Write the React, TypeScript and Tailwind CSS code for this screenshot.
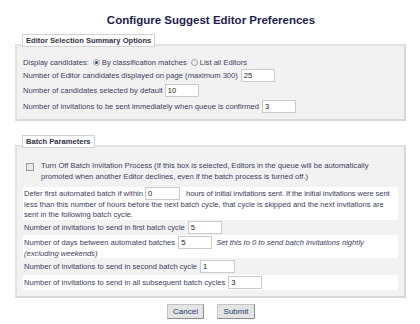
import React from 'react';

const inputCls =
  'h-[13px] w-[34px] shrink-0 border border-[#cbcbcb] bg-white pl-[2px] text-[7.6px] leading-[11px] text-[#222] outline-none';

function Field({ value, className = '' }: { value: string; className?: string }) {
  return <input readOnly defaultValue={value} className={`${inputCls} ${className}`} />;
}

function Radio({ checked }: { checked?: boolean }) {
  return (
    <span className="inline-flex h-[7px] w-[7px] shrink-0 items-center justify-center rounded-full border border-[#a0a0a0] bg-[#eeeeee]">
      {checked && <span className="h-[3px] w-[3px] rounded-full bg-[#2c4d78]" />}
    </span>
  );
}

function Legend({ children }: { children: React.ReactNode }) {
  return (
    <div className="relative z-10 ml-[7px] h-[13px] w-fit border border-[#d2d2d2] bg-white px-[3px] text-[7.6px] font-bold leading-[11px] text-[#333344]">
      {children}
    </div>
  );
}

export default function App() {
  return (
    <div className="h-[324px] w-[420px] overflow-hidden bg-white font-['Liberation_Sans',Arial,sans-serif] text-[7.6px] text-[#3d3d5a]">
      <h1 className="pl-[2px] pt-[14px] text-center text-[11.5px] font-bold leading-[13px] text-[#1d1d4f]">
        Configure Suggest Editor Preferences
      </h1>

      {/* Editor selection summary */}
      <div className="ml-[15px] mt-[7px] w-[391px]">
        <Legend>Editor Selection Summary Options</Legend>
        <div className="-mt-[3px] border-2 border-[#e2e2e2] border-r-[#d8d8d8] border-b-[#d8d8d8] bg-[#f2f2f2] px-[6px] pb-[6px] pt-[10px]">
          <div className="flex h-[13px] items-center">
            <span>Display candidates:</span>
            <span className="ml-[4px] mr-[2px] flex">
              <Radio checked />
            </span>
            <span>By classification matches</span>
            <span className="ml-[4px] mr-[2px] flex">
              <Radio />
            </span>
            <span>List all Editors</span>
          </div>
          <div className="flex h-[13px] items-center">
            <span>Number of Editor candidates displayed on page (maximum 300)</span>
            <Field value="25" className="ml-[3px]" />
          </div>
          <div className="mt-[2px] flex h-[13px] items-center">
            <span>Number of candidates selected by default</span>
            <Field value="10" className="ml-[2px]" />
          </div>
          <div className="mt-[3px] flex h-[13px] items-center">
            <span>Number of invitations to be sent immediately when queue is confirmed</span>
            <Field value="3" className="ml-[3px]" />
          </div>
        </div>
      </div>

      {/* Batch parameters */}
      <div className="ml-[15px] mt-[14px] w-[391px]">
        <Legend>Batch Parameters</Legend>
        <div className="-mt-[3px] border-2 border-[#e2e2e2] border-r-[#d8d8d8] border-b-[#d8d8d8] bg-[#f2f2f2] px-[6px] pb-[6px] pt-[14px]">
          <div className="flex items-start leading-[10.5px]">
            <span className="ml-[3px] mr-[7px] mt-[2px] h-[8px] w-[8px] shrink-0 border border-[#9c9c9c] bg-[#e9e9e9]" />
            <span>
              Turn Off Batch Invitation Process (If this box is selected, Editors in the queue will be automatically
              <br />
              promoted when another Editor declines, even if the batch process is turned off.)
            </span>
          </div>

          <div className="mt-[5px] flex flex-col">
            <div className="h-[33px] whitespace-nowrap bg-white pl-[1px]">
              <div className="flex h-[13px] items-center">
                <span>Defer first automated batch if within</span>
                <Field value="0" className="ml-[2px] mr-[6px] w-[35px]" />
                <span className="tracking-[-0.1px]">
                  hours of initial invitations sent. If the initial invitations were sent
                </span>
              </div>
              <div className="h-[10px] leading-[10px]">
                less than this number of hours before the next batch cycle, that cycle is skipped and the next invitations are
              </div>
              <div className="h-[10px] leading-[10px]">sent in the following batch cycle.</div>
            </div>

            <div className="flex h-[15px] items-center pl-[1px]">
              <span>Number of invitations to send in first batch cycle</span>
              <Field value="5" className="ml-[3px]" />
            </div>

            <div className="h-[23px] whitespace-nowrap bg-white pl-[1px] pt-[1px]">
              <div className="flex h-[13px] items-center">
                <span>Number of days between automated batches</span>
                <Field value="5" className="ml-[3px] mr-[4px]" />
                <span className="italic">Set this to 0 to send batch invitations nightly</span>
              </div>
              <div className="h-[9px] italic leading-[9px]">(excluding weekends)</div>
            </div>

            <div className="flex h-[17px] items-center pl-[1px]">
              <span>Number of invitations to send in second batch cycle</span>
              <Field value="1" className="ml-[3px] w-[35px]" />
            </div>

            <div className="flex h-[15px] items-center bg-white pl-[1px]">
              <span>Number of invitations to send in all subsequent batch cycles</span>
              <Field value="3" className="ml-[3px]" />
            </div>
          </div>
        </div>
      </div>

      <div className="mt-[6px] flex justify-center gap-[13px] pl-[2px]">
        <button className="h-[15px] w-[37px] border border-[#c4c4c4] border-b-[#8c8c8c] border-r-[#8c8c8c] bg-[#e4e4e4] text-[8px] leading-[12px] text-[#243a68]">
          Cancel
        </button>
        <button className="h-[15px] w-[38px] border border-[#c4c4c4] border-b-[#8c8c8c] border-r-[#8c8c8c] bg-[#e4e4e4] text-[8px] leading-[12px] text-[#243a68]">
          Submit
        </button>
      </div>
    </div>
  );
}
